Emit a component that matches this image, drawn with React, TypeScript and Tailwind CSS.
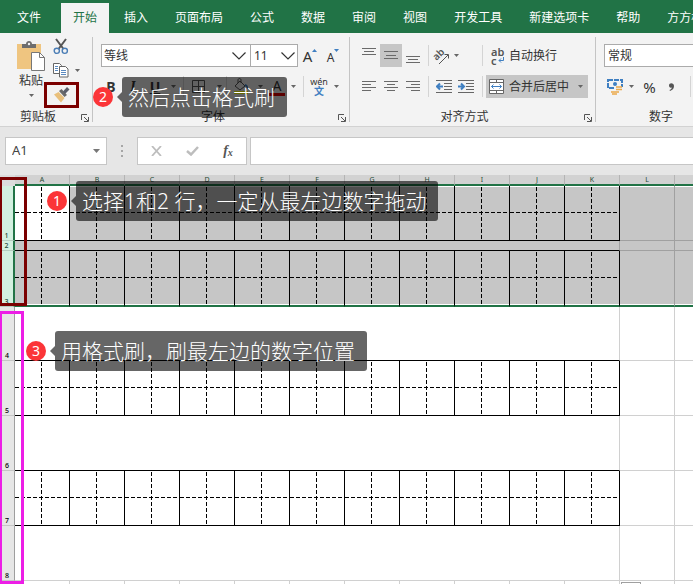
import React from "react";

const tabs = ["插入", "页面布局", "公式", "数据", "审阅", "视图", "开发工具", "新建选项卡", "帮助", "方方格子"];
const columns = ["A", "B", "C", "D", "E", "F", "G", "H", "I", "J", "K", "L"];

interface SheetRow {
  id: number,
  height: string,
  boxed: boolean,
  selected: boolean,
  bottom: "ink" | "grid" | "range"
}

const rows: SheetRow[] = [
  { id: 1, height: "h-[55px]", boxed: true, selected: true, bottom: "ink" },
  { id: 2, height: "h-[10px]", boxed: false, selected: true, bottom: "ink" },
  { id: 3, height: "h-[56px]", boxed: true, selected: true, bottom: "range" },
  { id: 4, height: "h-[54px]", boxed: false, selected: false, bottom: "ink" },
  { id: 5, height: "h-[55px]", boxed: true, selected: false, bottom: "ink" },
  { id: 6, height: "h-[55px]", boxed: false, selected: false, bottom: "ink" },
  { id: 7, height: "h-[55px]", boxed: true, selected: false, bottom: "ink" },
  { id: 8, height: "h-[55px]", boxed: false, selected: false, bottom: "grid" },
];

const Caret = () => (
  <svg width="5" height="3" viewBox="0 0 5 3" className="shrink-0"><path d="M0 0h5L2.500 3z" fill="#666" /></svg>
);

const Chevron = () => (
  <svg width="14" height="8" viewBox="0 0 14 8" fill="none" stroke="#333" strokeWidth="1.200"><path d="M.5.5 7 7 13.500.5" /></svg>
);

const Launcher = () => (
  <button aria-label="更多" className="absolute right-[3px] top-[5px]">
    <svg width="8" height="8" viewBox="0 0 8 8" fill="none" stroke="#555"><path d="M.5 6V.5H6M3 3l4 4M7.500 3v4.500H3" /></svg>
  </button>
);

const Divider = () => <span className="w-px h-[21px] bg-[#d4d4d4] shrink-0" />;

const GroupLine = () => <span className="w-px my-1 bg-[#c4c4c4] shrink-0" />;

function Lines({ d }: { d: string }) {
  return (
    <svg width="14" height="15" viewBox="0 0 14 15" fill="none" stroke="#6a6a6a"><path d={d} /></svg>
  );
}

function Tool({ label, className = "w-[22px]", children }: { label: string, className?: string, children: React.ReactNode }) {
  return (
    <button aria-label={label} className={"flex items-center justify-center h-[23px] shrink-0 " + className}>{children}</button>
  );
}

function GroupLabel({ children }: { children: string }) {
  return (
    <div className="relative mt-[11px] h-4 pr-4 text-center leading-4">
      {children}
      <Launcher />
    </div>
  );
}

function Clipboard() {
  return (
    <div className="w-[92px] shrink-0">
      <div className="flex h-[65px]">
        <button className="flex flex-col items-center w-[28px] ml-[17px] pt-2">
          <svg width="28" height="30" viewBox="0 0 28 30" className="shrink-0">
            <path d="M0 3h24v9h-10v16H0z" fill="#efc580" />
            <path d="M5 7V3h4c0-4 6-4 6 0h4v4z" fill="#6d6d6d" />
            <circle cx="12" cy="3" r="1.200" fill="#f3f3f3" />
            <path d="M14.500 11.500h8l5 5v13h-13z" fill="#fff" stroke="#777" />
            <path d="M22.500 11.500v5h5" fill="none" stroke="#777" />
          </svg>
          <span className="leading-4 whitespace-nowrap mt-[2px] mb-[5px]">粘贴</span>
          <Caret />
        </button>
        <div className="flex flex-col gap-px ml-2 pt-[2px]">
          <button aria-label="剪切" className="h-[23px] shrink-0">
            <svg width="16" height="17" viewBox="0 0 16 17" fill="none">
              <path d="M3 1l7.500 10M13 1 5.500 11" stroke="#555" strokeWidth="2" />
              <circle cx="3.800" cy="12.800" r="2.600" stroke="#4a7db5" strokeWidth="1.400" />
              <circle cx="11.800" cy="12.800" r="2.600" stroke="#4a7db5" strokeWidth="1.400" />
            </svg>
          </button>
          <button aria-label="复制" className="h-[23px] flex items-center gap-[6px] shrink-0">
            <svg width="16" height="15" viewBox="0 0 16 15" fill="#fff" stroke="#666">
              <path d="M.5.5h6l2 2v8h-8z" />
              <path d="M6.500 3.500h6l2.500 2.500v8H6.500z" />
              <path d="M2 3.500h3M2 5.500h3M2 7.500h3M8 7.500h5M8 9.500h5M8 11.500h5" stroke="#5b8ac0" />
            </svg>
            <Caret />
          </button>
          <button aria-label="格式刷" className="h-[23px] shrink-0">
            <svg width="17" height="17" viewBox="0 0 17 17">
              <path d="M1 8.500 5.500 6l6 6L8 16.500z" fill="#e9c07c" />
              <path d="m6 5 2.500-2 5.500 6-2.500 2z" fill="#6a6a6a" />
              <path d="m10 5.500 4-4.500 2.500 2.500L12 8z" fill="#5b5f6b" />
            </svg>
          </button>
        </div>
      </div>
      <div className="relative mt-[11px] h-4 leading-4 pl-5">剪贴板<Launcher /></div>
    </div>
  );
}

function FontGroup() {
  return (
    <div className="w-[256px] shrink-0 pt-[11px]">
      <div className="flex items-center pl-2">
        <button aria-label="字体名称" className="flex items-center justify-between w-[150px] h-[23px] border border-[#ababab] bg-white pl-[2px] pr-1">
          等线<Chevron />
        </button>
        <button aria-label="字号" className="flex items-center justify-between w-[47px] h-[23px] border border-l-0 border-[#ababab] bg-white pl-[3px] pr-[2px] text-xs">
          11<Chevron />
        </button>
        <Tool label="增大字号" className="w-[24px]">
          <span className="text-[15px] pt-px">A</span>
          <svg width="5" height="3" viewBox="0 0 5 3" className="mb-[11px]"><path d="M0 3h5L2.500 0z" fill="#3f7fc1" /></svg>
        </Tool>
        <Tool label="减小字号" className="w-[22px]">
          <span className="text-[12px] pt-1">A</span>
          <svg width="5" height="3" viewBox="0 0 5 3" className="mb-[11px]"><path d="M0 0h5L2.500 3z" fill="#3f7fc1" /></svg>
        </Tool>
      </div>
      <div className="flex items-center pl-[7px] mt-2 text-sm">
        <Tool label="加粗"><b>B</b></Tool>
        <Tool label="倾斜"><i className="font-serif font-bold">I</i></Tool>
        <Tool label="下划线"><u className="font-bold">U</u></Tool>
        <Tool label="下划线样式" className="w-[14px]"><Caret /></Tool>
        <span className="w-[3px]" />
        <Divider />
        <Tool label="边框" className="w-[28px]">
          <svg width="13" height="13" viewBox="0 0 13 13" fill="none" stroke="#555"><path d="M.5.5h12v12H.5zM6.500 0v13M0 6.500h13" /></svg>
        </Tool>
        <Tool label="边框样式" className="w-[14px]"><Caret /></Tool>
        <Divider />
        <Tool label="填充颜色" className="w-[28px]">
          <svg width="16" height="17" viewBox="0 0 16 17" fill="none" stroke="#555">
            <path d="m2 8 5-5 5 5-5 4zM5 5V2c0-2 3-2 3 0v3" />
            <path d="M12 7c3 1 2 3 2 4" stroke="#3f7fc1" strokeWidth="2" />
            <path d="M1 14.500h14" stroke="#ffff00" strokeWidth="3" />
          </svg>
        </Tool>
        <Tool label="填充样式" className="w-[10px]"><Caret /></Tool>
        <Tool label="字体颜色" className="w-[24px] flex-col">
          <span className="leading-[15px]">A</span>
          <span className="w-4 h-[3px] bg-[#e00000]" />
        </Tool>
        <Tool label="颜色样式" className="w-[8px]"><Caret /></Tool>
        <span className="w-[6px]" />
        <Divider />
        <Tool label="拼音" className="w-[30px] flex-col">
          <span className="text-[9px] leading-[9px]">wén</span>
          <span className="text-[10px] leading-[11px] font-bold text-[#3f7fc1]">文</span>
        </Tool>
        <Caret />
      </div>
      <GroupLabel>字体</GroupLabel>
    </div>
  );
}

function AlignGroup() {
  return (
    <div className="w-[245px] shrink-0 pt-[11px]">
      <div className="flex items-center pl-2">
        <Tool label="顶端对齐"><Lines d="M0 .5h14M2 3.500h10M0 6.500h14" /></Tool>
        <Tool label="垂直居中" className="w-[22px] bg-[#c6c6c6]"><Lines d="M0 3.500h14M2 7.500h10M0 10.500h14" /></Tool>
        <Tool label="底端对齐"><Lines d="M0 8.500h14M2 11.500h10M0 14.500h14" /></Tool>
        <span className="w-1" />
        <Divider />
        <Tool label="方向" className="w-8 gap-1">
          <span className="relative flex items-center justify-center w-[18px] h-[18px]">
            <span className="-rotate-45 mr-1 mb-1 text-[10px] leading-3 font-semibold text-[#555]">ab</span>
            <svg width="18" height="18" viewBox="0 0 18 18" fill="none" stroke="#555" className="absolute inset-0"><path d="M7 17 16 8M12.500 7.500h4v4" /></svg>
          </span>
          <Caret />
        </Tool>
        <span className="w-[21px]" />
        <Divider />
        <button className="flex items-center gap-[5px] h-[23px] pl-2 whitespace-nowrap">
          <span className="flex flex-col w-[13px] text-[11px] leading-[9px] font-semibold text-[#555]">
            <span>ab</span>
            <span className="flex items-center gap-px">
              c
              <svg width="6" height="6" viewBox="0 0 6 6" fill="none" stroke="#3f7fc1"><path d="M5.500 0v3.500H1M3 1.500l-2 2 2 2" /></svg>
            </span>
          </span>
          自动换行
        </button>
      </div>
      <div className="flex items-center pl-2 mt-2">
        <Tool label="左对齐"><Lines d="M0 2.500h14M0 5.500h9M0 8.500h14M0 11.500h9" /></Tool>
        <Tool label="居中"><Lines d="M0 2.500h14M3 5.500h8M0 8.500h14M3 11.500h8" /></Tool>
        <Tool label="右对齐"><Lines d="M0 2.500h14M5 5.500h9M0 8.500h14M5 11.500h9" /></Tool>
        <span className="w-1" />
        <Divider />
        <span className="w-1" />
        <Tool label="减少缩进">
          <svg width="16" height="13" viewBox="0 0 16 13" fill="none" stroke="#666">
            <path d="M0 .5h16M8 3.500h8M8 6.500h8M8 9.500h8M0 12.500h16" />
            <path d="M7 6.500H2M4 3.500l-3 3 3 3" stroke="#3f7fc1" strokeWidth="2" />
          </svg>
        </Tool>
        <Tool label="增加缩进">
          <svg width="16" height="13" viewBox="0 0 16 13" fill="none" stroke="#666">
            <path d="M0 .5h16M8 3.500h8M8 6.500h8M8 9.500h8M0 12.500h16" />
            <path d="M0 6.500h5M3 3.500l3 3-3 3" stroke="#3f7fc1" strokeWidth="2" />
          </svg>
        </Tool>
        <span className="w-[5px]" />
        <Divider />
        <button className="flex items-center h-[23px] w-[102px] ml-[3px] pl-[3px] bg-[#c6c6c6] whitespace-nowrap">
          <svg width="15" height="15" viewBox="0 0 15 15" fill="#fff" stroke="#666" className="mr-[5px]">
            <path d="M.5.5h14v14H.5zM7.500.5v3M7.500 11.500v3M.5 3.500h14M.5 11.500h14" />
            <path d="M2.500 7.500h10M4.500 5.500l-2 2 2 2M10.500 5.500l2 2-2 2" fill="none" stroke="#3f7fc1" />
          </svg>
          合并后居中
          <span className="w-[9px]" />
          <Caret />
        </button>
      </div>
      <GroupLabel>对齐方式</GroupLabel>
    </div>
  );
}

function NumberGroup() {
  return (
    <div className="flex-1 min-w-0 pt-[11px] pl-2">
      <button className="flex items-center w-full h-[23px] border border-r-0 border-[#ababab] bg-white pl-[3px]">常规</button>
      <div className="flex items-center mt-2 pl-[3px]">
        <Tool label="会计格式" className="w-4">
          <svg width="16" height="16" viewBox="0 0 16 16" fill="none">
            <path d="M1 1h14v8H1z" stroke="#3f7fc1" strokeWidth="2" strokeDasharray="5 1" />
            <circle cx="8" cy="5" r="2" fill="#3f7fc1" />
            <path d="M8 8h8v8H8z" fill="#f3f3f3" />
            <path d="M9 8h6M9 10.500h6M4 13h8M5 15h5" stroke="#eba94a" strokeWidth="1.600" />
          </svg>
        </Tool>
        <span className="w-[6px]" />
        <Caret />
        <Tool label="百分比" className="w-[25px] ml-[3px] text-[15px]">%</Tool>
        <Tool label="千位分隔" className="w-[18px]">
          <svg width="5" height="8" viewBox="0 0 5 8"><path d="M0 2.500C0-.5 5-.5 5 3c0 2-1 4-4 5l-.5-1C2 6.500 3 5.500 2.500 4.500 1 5 0 4 0 2.500z" fill="#555" /></svg>
        </Tool>
        <span className="w-[10px]" />
        <Divider />
      </div>
      <div className="mt-[11px] h-4 leading-4 pl-[45px]">数字</div>
    </div>
  );
}

function FormulaBar() {
  return (
    <div className="flex h-12 py-[10px] pl-[5px] bg-[#e6e6e6] shrink-0">
      <div className="flex items-center w-[102px] bg-white border border-[#c6c6c6] pl-[6px] pr-[6px] shrink-0">
        <input aria-label="名称框" defaultValue="A1" className="w-0 flex-1 text-[13px] text-[#444] outline-none" />
        <svg width="7" height="4" viewBox="0 0 7 4"><path d="M0 0h7L3.500 4z" fill="#777" /></svg>
      </div>
      <div className="flex flex-col items-center justify-center gap-[3px] w-[30px] shrink-0">
        <span className="size-[2px] bg-[#a6a6a6]" />
        <span className="size-[2px] bg-[#a6a6a6]" />
        <span className="size-[2px] bg-[#a6a6a6]" />
      </div>
      <div className="flex items-center w-[110px] bg-white border border-[#c6c6c6] shrink-0">
        <Tool label="取消" className="w-[36px]">
          <svg width="11" height="10" viewBox="0 0 11 10" stroke="#bdbdbd" strokeWidth="1.800"><path d="M1 0l9 10M10 0 1 10" /></svg>
        </Tool>
        <Tool label="输入" className="w-[36px]">
          <svg width="13" height="10" viewBox="0 0 13 10" fill="none" stroke="#bdbdbd" strokeWidth="2.500"><path d="M1 5l4 3.500L12 1" /></svg>
        </Tool>
        <Tool label="插入函数" className="w-[36px] font-['Liberation_Serif',serif] italic font-bold text-[#555]">
          <span className="text-sm">f</span><span className="text-[10px] pt-1">x</span>
        </Tool>
      </div>
      <input aria-label="编辑栏" className="flex-1 min-w-0 ml-[3px] bg-white border border-r-0 border-[#c6c6c6] outline-none" />
    </div>
  );
}

const Guides = () => (
  <svg width="54" height="54" viewBox="0 0 54 54" className="block" stroke="#000" strokeDasharray="4 2" shapeRendering="crispEdges">
    <path d="M26.500 1v53M0 26.500h54" />
  </svg>
);

function cellClass(row: SheetRow, col: number) {
  const ink = col < 11;
  const classes = ["p-0 align-top"];
  if (row.selected) {
    classes.push(row.id === 1 && col === 0 ? "bg-white" : "bg-[#c6c6c6]");
  }
  if (row.bottom === "range") {
    classes.push("border-b-2 border-b-[#217346] shadow-[inset_0_-1px_0_#fff]");
  } else if (ink && row.bottom === "ink") {
    classes.push("border-b border-b-black");
  } else {
    classes.push(row.selected ? "border-b border-b-[#a0a0a0]" : "border-b border-b-[#d0d0d0]");
  }
  if (row.id === 1) {
    classes.push("shadow-[inset_0_1px_0_#fff]");
  }
  if (ink && row.boxed) {
    classes.push("border-r border-r-black");
  } else if (col === 10 || col === 11) {
    classes.push(row.selected ? "border-r border-r-[#a0a0a0]" : "border-r border-r-[#d0d0d0]");
  }
  return classes.join(" ");
}

function Sheet() {
  return (
    <div className="flex-1 min-h-0 overflow-hidden">
      <table className="w-full table-fixed border-separate border-spacing-0 font-['Noto_Sans',sans-serif] text-[7px] leading-[9px]">
        <colgroup>
          <col className="w-[15px]" />
          {columns.map((name) => <col key={name} className="w-[55px]" />)}
          <col />
        </colgroup>
        <thead>
          <tr className="h-[11px]">
            <th className="p-0 bg-[#dcdcdc]" />
            {columns.map((name) => (
              <th key={name} className="p-0 h-[11px] font-normal text-[#1f4a35] bg-[#d2d2d2] border-r border-r-[#b4b4b4] border-b-2 border-b-[#217346]">{name}</th>
            ))}
            <th className="p-0 bg-[#d2d2d2] border-b-2 border-b-[#217346]" />
          </tr>
        </thead>
        <tbody>
          {rows.map((row) => (
            <tr key={row.id} className={row.height}>
              <th
                className={row.selected
                  ? "p-0 align-bottom font-medium text-[#1f4a35] bg-[#d3f0e0] border-r-2 border-r-[#217346] border-b border-b-[#b5cfc1]"
                  : "p-0 align-bottom font-medium text-black bg-[#e6e6e6] border-r border-r-[#9e9e9e] border-b border-b-[#c6c6c6]"}
              >
                {row.id}
              </th>
              {columns.map((name, col) => (
                <td key={name} className={cellClass(row, col)}>
                  {row.boxed && col < 11 && <Guides />}
                </td>
              ))}
              <td className={cellClass(row, 12)} />
            </tr>
          ))}
          <tr className="h-[55px]">
            <th className="bg-[#e6e6e6] border-r border-r-[#9e9e9e]" />
            {columns.map((name) => (
              <td key={name} className="p-0 align-top border-r border-r-[#d0d0d0]">
                {name === "L" && <div className="w-5 h-5 mt-px ml-px border border-[#a0a0a0] bg-white" />}
              </td>
            ))}
            <td />
          </tr>
        </tbody>
      </table>
    </div>
  );
}

// numbered badge with its speech bubble
function Callout({ step, className, children }: { step: number, className: string, children: string }) {
  return (
    <div className={"absolute flex items-center text-white whitespace-nowrap " + className}>
      <span className="flex items-center justify-center size-5 rounded-full bg-[#fb3538] text-sm">{step}</span>
      <svg width="5" height="10" viewBox="0 0 5 10" className="ml-1"><path d="M5 0v10L0 5z" fill="#000" fillOpacity=".6" /></svg>
      <span className="h-10 leading-10 pl-[6px] pr-3 rounded-[3px] bg-black/60 text-[21px] font-light">{children}</span>
    </div>
  );
}

export default function App() {
  return (
    <div className="relative flex flex-col h-screen overflow-hidden bg-white text-xs text-[#333] font-['Noto_Sans','Noto_Sans_CJK_SC',sans-serif]">
      <nav className="flex items-end gap-[3px] h-[33px] bg-[#217346] text-white whitespace-nowrap overflow-hidden shrink-0">
        <button className="h-[30px] px-[17px] shrink-0">文件</button>
        <button className="h-[30px] px-3 bg-[#f3f3f3] text-[#217346] shrink-0">开始</button>
        {tabs.map((tab) => (
          <button key={tab} className="h-[30px] px-3 shrink-0">{tab}</button>
        ))}
      </nav>
      <div className="flex h-[94px] bg-[#f3f3f3] border-b border-[#d2d2d2] overflow-hidden shrink-0">
        <Clipboard />
        <GroupLine />
        <FontGroup />
        <GroupLine />
        <AlignGroup />
        <GroupLine />
        <NumberGroup />
      </div>
      <FormulaBar />
      <Sheet />

      <div className="absolute left-[44px] top-[82px] w-[35px] h-[26px] border-3 border-[#7b0000]" />
      <div className="absolute left-[-1px] top-[177px] w-[28px] h-[129px] border-3 border-[#7b0000]" />
      <div className="absolute left-[-1px] top-[311px] bottom-0 w-[25px] border-3 border-[#ec1ee6]" />
      <Callout step={2} className="left-[93px] top-[77px]">然后点击格式刷</Callout>
      <Callout step={1} className="left-[47px] top-[181px]">选择1和2 行，一定从最左边数字拖动</Callout>
      <Callout step={3} className="left-[26px] top-[331px]">用格式刷，刷最左边的数字位置</Callout>
    </div>
  );
}
